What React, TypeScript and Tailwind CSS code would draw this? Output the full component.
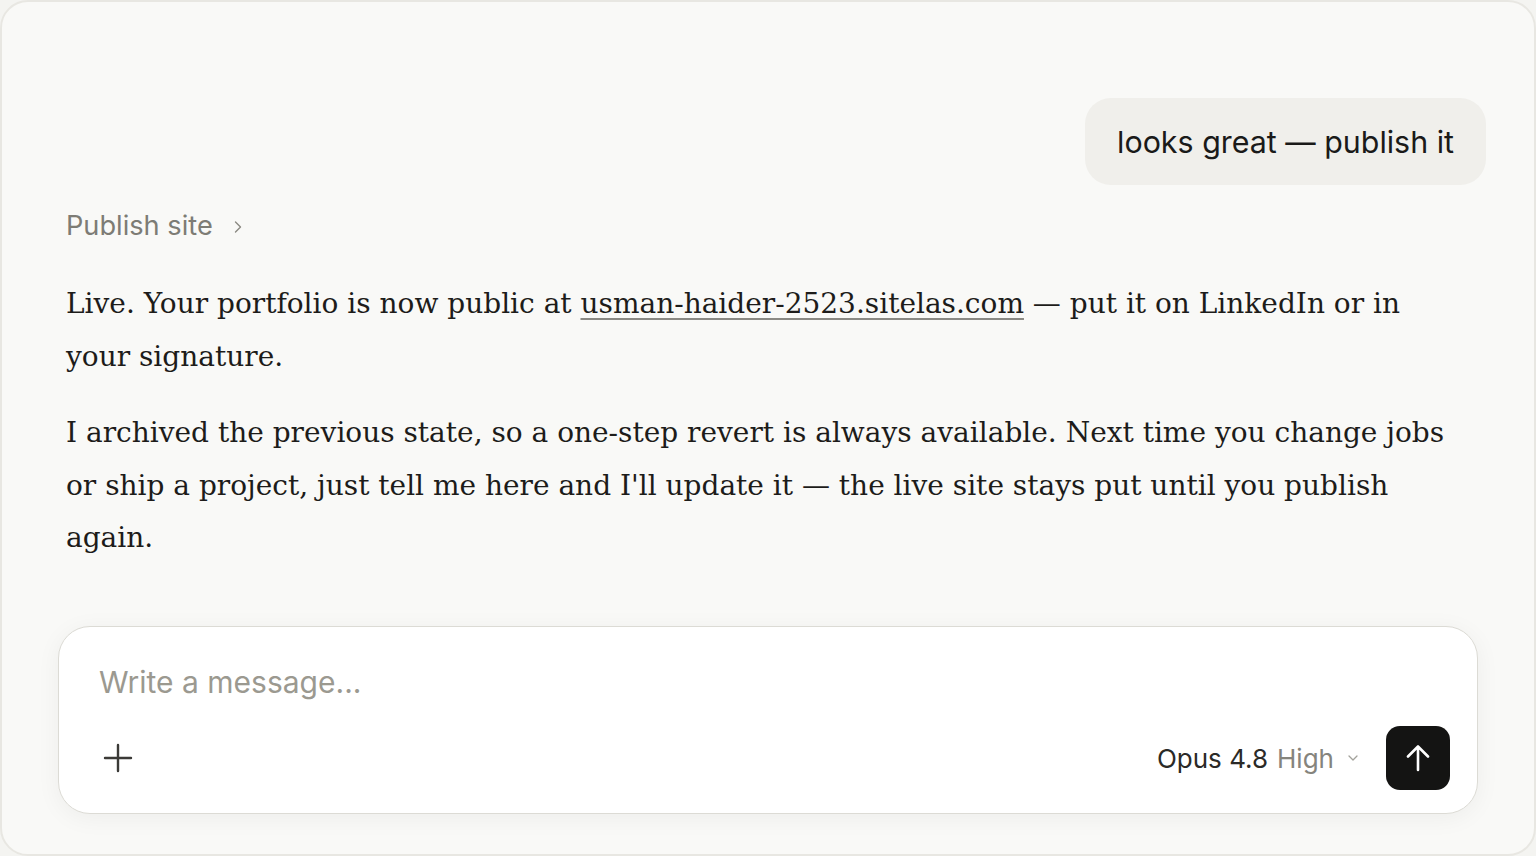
import React from "react";

export default function App() {
  const serif = { fontFamily: '"DejaVu Serif", serif' };
  return (
    <div className="w-[1536px] h-[856px] bg-[#f4f4f1]">
      <div
        className="w-full h-full bg-[#f9f9f7] border-2 border-[#e8e7e2] rounded-[28px] flex flex-col overflow-hidden"
        style={{ fontFamily: 'Inter, "Noto Sans", sans-serif' }}
      >
        <div className="flex-1 pl-[64px] pr-[48px] pt-[96px]">
          <div className="flex justify-end">
            <div className="h-[87px] px-[32px] flex items-center rounded-[26px] bg-[#f0efeb] text-[30.4px] text-[#1a1a19]">
              <span className="mt-[2px]">looks great — publish it</span>
            </div>
          </div>
          <div className="mt-[23px] h-[36px] flex items-center gap-[18px] text-[27.2px] text-[#7d7c75]">
            <span>Publish site</span>
            <svg width="14" height="14" viewBox="0 0 14 14" fill="none" className="mt-[1px]">
              <path d="M4.5 2 L9.5 7 L4.5 12" stroke="#8a8982" strokeWidth="1.4" strokeLinecap="round" strokeLinejoin="round" />
            </svg>
          </div>
          <div className="mt-[34px] w-[1380px] text-[28px] leading-[52.5px] text-[#1d1c1a]" style={serif}>
            <p>
              <span>Live. Your portfolio is now public at </span>
              <span className="underline decoration-[#8a8984] decoration-[1.5px] underline-offset-[5px]">
                usman-haider-2523.sitelas.com
              </span>
              <span> — put it on LinkedIn or in</span> <span>your signature.</span>
            </p>
            <p className="mt-[24px]">
              I archived the previous state, so a one-step revert is always available. Next time you change jobs or ship a project, just tell me here and I'll update it — the live site stays put until you publish again.
            </p>
          </div>
        </div>
        <div className="mx-[56px] mb-[40px] h-[188px] bg-white border border-[#dcdbd5] rounded-[32px] shadow-[0_4px_24px_rgba(0,0,0,0.05)] flex flex-col pl-[40px] pr-[27px] pt-[36px] pb-[23px]">
          <div className="text-[30px] leading-[38px] text-[#9b9990]">Write a message...</div>
          <div className="mt-auto flex items-center">
            <svg width="30" height="30" viewBox="0 0 30 30" fill="none" className="ml-[4px]">
              <path d="M15 2 V28 M2 15 H28" stroke="#3b3a37" strokeWidth="2.4" strokeLinecap="round" />
            </svg>
            <div className="ml-auto flex items-center text-[26px]">
              <span className="text-[#2b2a27]">Opus 4.8</span>
              <span className="ml-[9px] text-[#85847d]">High</span>
              <svg width="14" height="14" viewBox="0 0 14 14" fill="none" className="ml-[12px]">
                <path d="M3 5 L7 9 L11 5" stroke="#a3a29b" strokeWidth="1.3" strokeLinecap="round" strokeLinejoin="round" />
              </svg>
              <button className="ml-[26px] w-[64px] h-[64px] rounded-[14px] bg-[#141413] flex items-center justify-center">
                <svg width="24" height="28" viewBox="0 0 24 28" fill="none">
                  <path d="M12 26 V2.5 M2 12.5 L12 2.5 L22 12.5" stroke="white" strokeWidth="2.6" strokeLinecap="round" strokeLinejoin="round" />
                </svg>
              </button>
            </div>
          </div>
        </div>
      </div>
    </div>
  );
}
